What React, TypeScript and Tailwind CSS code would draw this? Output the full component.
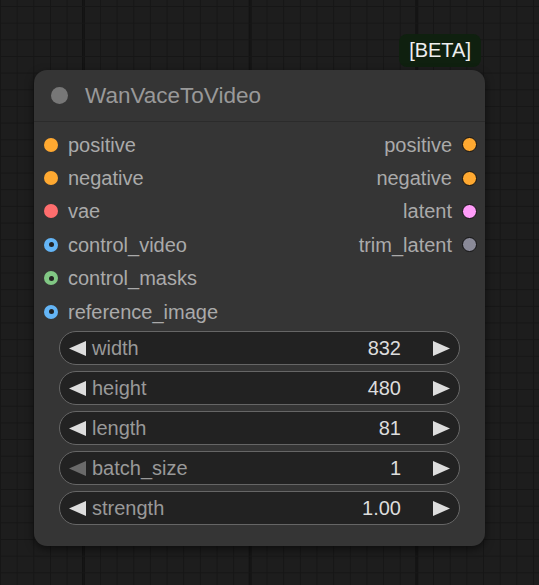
import React from 'react';

type Slot = { name: string; color: string; optional?: boolean };

const inputs: Slot[] = [
  { name: 'positive', color: '#ffa931' },
  { name: 'negative', color: '#ffa931' },
  { name: 'vae', color: '#ff6e6e' },
  { name: 'control_video', color: '#64b5f6', optional: true },
  { name: 'control_masks', color: '#81c784', optional: true },
  { name: 'reference_image', color: '#64b5f6', optional: true },
];

const outputs: Slot[] = [
  { name: 'positive', color: '#ffa931' },
  { name: 'negative', color: '#ffa931' },
  { name: 'latent', color: '#ff9cf9' },
  { name: 'trim_latent', color: '#8a8a98' },
];

const widgets = [
  { label: 'width', value: '832' },
  { label: 'height', value: '480' },
  { label: 'length', value: '81' },
  { label: 'batch_size', value: '1', atMin: true },
  { label: 'strength', value: '1.00' },
];

const Arrow = ({ dir, dim }: { dir: 'left' | 'right'; dim?: boolean }) => (
  <svg width="17" height="15" viewBox="0 0 17 15" className="shrink-0">
    <polygon
      points={dir === 'left' ? '17,0 0,7.5 17,15' : '0,0 17,7.5 0,15'}
      fill={dim ? '#6a6a6a' : '#dddddd'}
    />
  </svg>
);

const InputDot = ({ slot }: { slot: Slot }) => (
  <span
    className="w-[14px] h-[14px] rounded-full flex items-center justify-center shrink-0"
    style={{ backgroundColor: slot.color }}
  >
    {slot.optional && <span className="w-[5px] h-[5px] rounded-full bg-[#222]" />}
  </span>
);

export default function App() {
  return (
    <div className="w-[539px] h-[585px] overflow-hidden bg-[#1d1d1d] font-['Liberation_Sans',Arial,sans-serif]">
      {/* canvas grid: heavy lines every 10 cells */}
      <div className="w-full h-full bg-[linear-gradient(to_right,#121212_3px,transparent_3px)] bg-[size:166.67px_100%] bg-[position:82px_0]">
        <div className="w-full h-full pt-[34px] pl-[34px] bg-[linear-gradient(to_right,#161616_1px,transparent_1px),linear-gradient(to_bottom,#161616_1px,transparent_1px)] bg-[size:16.667px_16.667px] bg-[position:0_6px]">
          <div className="w-[451px] flex flex-col">
            {/* badge */}
            <div className="self-end mr-[4px] h-[33px] px-[10px] rounded-[8px] bg-[#0f200f] text-[#eeeeee] text-[20px] leading-[33px]">
              [BETA]
            </div>

            {/* node */}
            <div className="mt-[3px] rounded-[13px] bg-[#353535] shadow-[0_3px_8px_rgba(0,0,0,0.55)]">
              <div className="h-[52px] flex items-center gap-[17px] pl-[17px] border-b border-[#2b2b2b]">
                <span className="w-[17px] h-[17px] rounded-full bg-[#777]" />
                <span className="text-[22.5px] text-[#999]">WanVaceToVideo</span>
              </div>

              <div className="pt-[6px] flex justify-between">
                <div className="flex flex-col">
                  {inputs.map((s) => (
                    <div key={s.name} className="h-[33.4px] flex items-center gap-[10px] pl-[10px]">
                      <InputDot slot={s} />
                      <span className="text-[20px] text-[#aaa]">{s.name}</span>
                    </div>
                  ))}
                </div>
                <div className="flex flex-col">
                  {outputs.map((s) => (
                    <div key={s.name} className="h-[33.4px] flex items-center justify-end gap-[10px] pr-[8px]">
                      <span className="text-[20px] text-[#aaa]">{s.name}</span>
                      <span
                        className="w-[15px] h-[15px] rounded-full border-[1.5px] border-[#111] shrink-0"
                        style={{ backgroundColor: s.color }}
                      />
                    </div>
                  ))}
                </div>
              </div>

              <div className="mt-[3px] px-[25px] pb-[21px] flex flex-col gap-[6px]">
                {widgets.map((w) => (
                  <div
                    key={w.label}
                    className="h-[34px] rounded-full border-[1.5px] border-[#666] bg-[#222] flex items-center pl-[9px] pr-[9px]"
                  >
                    <Arrow dir="left" dim={w.atMin} />
                    <span className="ml-[6px] text-[20px] text-[#999]">{w.label}</span>
                    <span className="ml-auto text-[20px] text-[#ddd]">{w.value}</span>
                    <span className="ml-[32px]">
                      <Arrow dir="right" />
                    </span>
                  </div>
                ))}
              </div>
            </div>
          </div>
        </div>
      </div>
    </div>
  );
}
